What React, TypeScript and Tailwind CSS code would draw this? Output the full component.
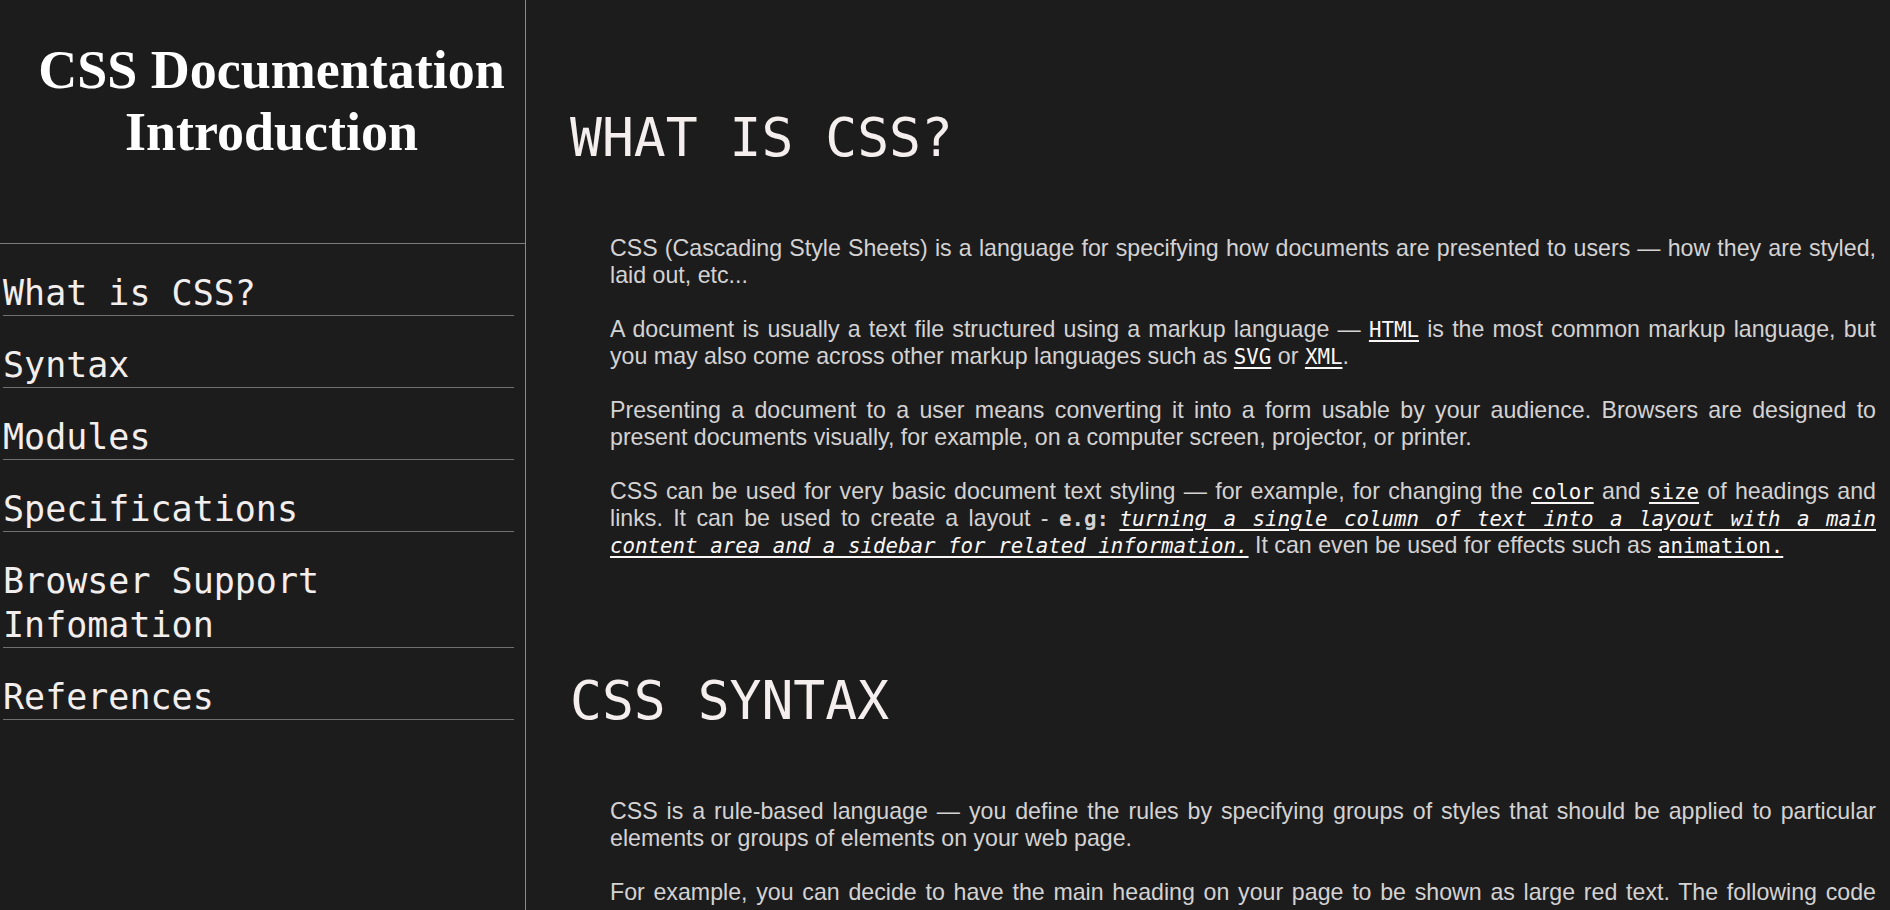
import React from "react";

const navItems = [
  "What is CSS?",
  "Syntax",
  "Modules",
  "Specifications",
  "Browser Support Infomation",
  "References",
];

function Code({ children, italic = false }: { children: React.ReactNode; italic?: boolean }) {
  return (
    <a
      href="#"
      className={
        "font-['DejaVu_Sans_Mono',monospace] text-[20.8px] leading-none text-[#fbf7f7] underline underline-offset-[3px] decoration-[1.5px]" +
        (italic ? " italic" : "")
      }
    >
      {children}
    </a>
  );
}

function Para({ children, last = false }: { children: React.ReactNode; last?: boolean }) {
  return <p className={"text-justify " + (last ? "" : "mb-[27px]")}>{children}</p>;
}

function Heading({ children }: { children: React.ReactNode }) {
  return (
    <h2 className="font-['DejaVu_Sans_Mono',monospace] text-[53px] leading-[60px] font-normal uppercase text-[#f4eeee]">
      {children}
    </h2>
  );
}

export default function App() {
  return (
    <div className="flex min-h-screen w-full bg-[#1c1c1c]">
      <aside className="w-[526px] shrink-0 border-r border-[#8a8a8a]">
        <header className="border-b border-[#7d7d7d] pl-[18px] pt-[39px] pb-[80px]">
          <h1 className="text-center font-['Liberation_Serif',serif] text-[54px] font-bold leading-[62px] text-white">
            CSS Documentation Introduction
          </h1>
        </header>
        <nav>
          <ul>
            {navItems.map((item) => (
              <li
                key={item}
                className="ml-[3px] mr-[11px] border-b border-[#707070] pt-[27px]"
              >
                <a
                  href="#"
                  className="block font-['DejaVu_Sans_Mono',monospace] text-[35px] leading-[44px] text-[#f3eeee]"
                >
                  {item}
                </a>
              </li>
            ))}
          </ul>
        </nav>
      </aside>

      <main className="min-w-0 flex-1 pl-[44px] pr-[14px] pt-[108px] pb-[80px]">
        <section>
          <Heading>What is CSS?</Heading>
          <div className="ml-[40px] mt-[67px] font-['Liberation_Sans',Arial,sans-serif] text-[23.2px] leading-[27px] text-[#d4d2d2]">
            <Para>
              CSS (Cascading Style Sheets) is a language for specifying how documents are presented to users — how
              they are styled, laid out, etc...
            </Para>
            <Para>
              A document is usually a text file structured using a markup language — <Code>HTML</Code> is the most
              common markup language, but you may also come across other markup languages such as <Code>SVG</Code> or{" "}
              <Code>XML</Code>.
            </Para>
            <Para>
              Presenting a document to a user means converting it into a form usable by your audience. Browsers are
              designed to present documents visually, for example, on a computer screen, projector, or printer.
            </Para>
            <Para last>
              CSS can be used for very basic document text styling — for example, for changing the{" "}
              <Code>color</Code> and <Code>size</Code> of headings and links. It can be used to create a layout -{" "}
              <span className="font-['DejaVu_Sans_Mono',monospace] text-[20.8px] leading-none font-bold">e.g:</span>{" "}
              <Code italic>
                turning a single column of text into a layout with a main content area and a sidebar for related
                information.
              </Code>{" "}
              It can even be used for effects such as <Code>animation.</Code>
            </Para>
          </div>
        </section>

        <section className="mt-[112px]">
          <Heading>CSS Syntax</Heading>
          <div className="ml-[40px] mt-[67px] font-['Liberation_Sans',Arial,sans-serif] text-[23.2px] leading-[27px] text-[#d4d2d2]">
            <Para>
              CSS is a rule-based language — you define the rules by specifying groups of styles that should be
              applied to particular elements or groups of elements on your web page.
            </Para>
            <Para last>
              For example, you can decide to have the main heading on your page to be shown as large red text. The
              following code shows a very simple CSS rule that would achieve the styling described above:
            </Para>
          </div>
        </section>
      </main>
    </div>
  );
}
